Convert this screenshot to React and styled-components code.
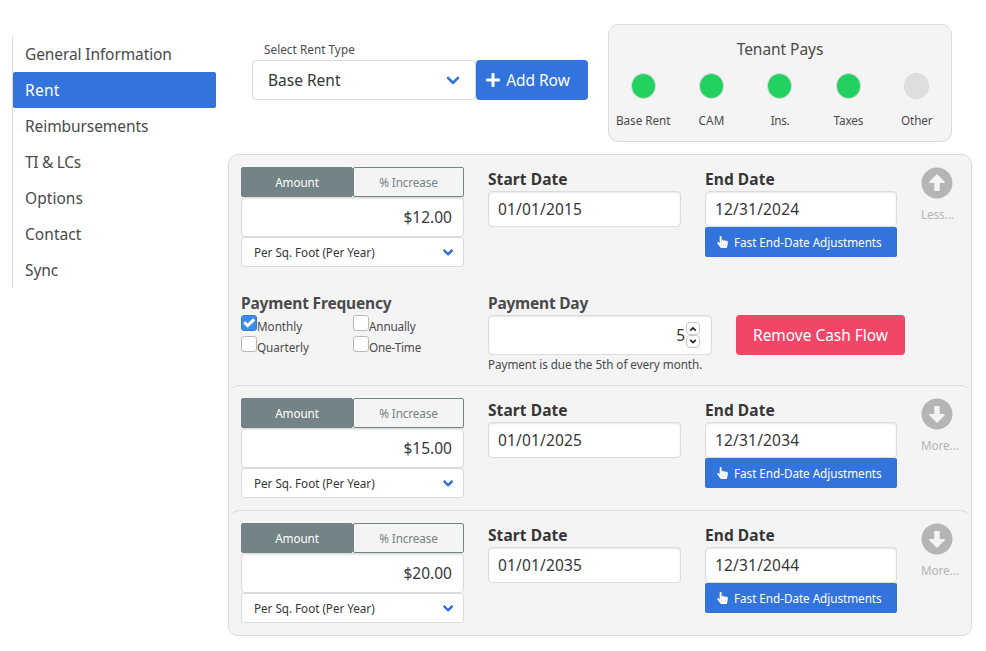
import React, { useState } from 'react';
import styled, { createGlobalStyle } from 'styled-components';
import {
  FaPlus,
  FaHandPointer,
  FaArrowAltCircleUp,
  FaArrowAltCircleDown,
} from 'react-icons/fa';

const color = {
  link: '#3273dc',
  danger: '#f14668',
  success: '#23d160',
  slate: '#738386',
  border: '#dbdbdb',
  panel: '#f4f4f4',
  text: '#4a4a4a',
  strong: '#363636',
  muted: '#b5b5b5',
};

const GlobalStyle = createGlobalStyle`
  *, *::before, *::after { box-sizing: border-box; }
  body {
    margin: 0;
    background: #fff;
    color: ${color.text};
    font-family: "Noto Sans", "Open Sans", sans-serif;
    font-size: 15.5px;
    line-height: 24px;
  }
  button, input { font: inherit; letter-spacing: inherit; }
`;

const Page = styled.div`
  display: flex;
  align-items: flex-start;
  width: 986px;
  height: 651px;
  padding: 24px 14px 0 12px;
  overflow: hidden;
`;

const Label = styled.span`
  letter-spacing: ${(p) => p.$track || 0}px;
  white-space: nowrap;
`;

const SideMenu = styled.nav`
  display: flex;
  flex-direction: column;
  flex: none;
  width: 204px;
  margin: 12px 12px 0 0;
  border-left: 1px solid ${color.border};
`;

const MenuItem = styled.a`
  height: 36px;
  padding: 6px 12px;
  border-radius: 2px;
  color: ${(p) => (p.$active ? '#fff' : color.text)};
  background: ${(p) => (p.$active ? color.link : 'transparent')};
  cursor: pointer;
`;

const Main = styled.main`
  width: 744px;
`;

const Header = styled.header`
  display: flex;
  justify-content: space-between;
  height: 118px;
  margin: 0 20px 12px 24px;
`;

const RentType = styled.div`
  display: flex;
  flex-direction: column;
  padding-top: 15px;
`;

const RentTypeLabel = styled.label`
  height: 21px;
  padding-left: 12px;
  font-size: 11.7px;
  line-height: 21px;
`;

const Row = styled.div`
  display: flex;
`;

const Select = styled.div`
  display: flex;
  align-items: center;
  justify-content: space-between;
  width: ${(p) => (p.$small ? 223 : 224)}px;
  height: ${(p) => (p.$small ? 30 : 40)}px;
  padding: 0 ${(p) => (p.$small ? '12px 0 12px' : '17px 0 15px')};
  border: 1px solid ${color.border};
  border-radius: ${(p) => (p.$small ? 3 : 4)}px;
  background: #fff;
  color: ${color.strong};
  font-size: ${(p) => (p.$small ? 11.7 : 15.5)}px;

  &::after {
    content: '';
    width: ${(p) => (p.$small ? 7.5 : 10)}px;
    height: ${(p) => (p.$small ? 7.5 : 10)}px;
    margin-top: ${(p) => (p.$small ? -3 : -4)}px;
    border: 3.4px solid ${color.link};
    border-width: ${(p) => (p.$small ? 3 : 3.4)}px;
    border-top: 0;
    border-right: 0;
    border-radius: 2px;
    transform: rotate(-45deg);
  }
`;

const Button = styled.button`
  display: flex;
  align-items: center;
  justify-content: center;
  gap: 5px;
  width: ${(p) => p.$width}px;
  height: 40px;
  padding: 0 ${(p) => p.$trim || 0}px 0 0;
  border: 0;
  border-radius: 4px;
  background: ${(p) => (p.$danger ? color.danger : color.link)};
  color: #fff;
  cursor: pointer;
`;

const TenantBox = styled.section`
  display: flex;
  flex-direction: column;
  width: 344px;
  padding-top: 12px;
  border: 1px solid ${color.border};
  border-radius: 10px;
  background: ${color.panel};
  text-align: center;
`;

const TenantOptions = styled.div`
  display: grid;
  grid-template-columns: repeat(5, 68.4px);
`;

const TenantOption = styled.div`
  display: flex;
  flex-direction: column;
  align-items: center;
  padding-top: 12px;
  font-size: 11.7px;
`;

const Dot = styled.span`
  width: 25px;
  height: 26px;
  margin-bottom: 9px;
  border: 1px solid ${color.border};
  border-radius: 50%;
  background: ${(p) => (p.$on ? color.success : '#dedede')};
`;

const CashFlowList = styled.section`
  height: 482px;
  border: 1px solid ${color.border};
  border-radius: 10px;
  background: ${color.panel};
`;

const CashFlow = styled.article`
  padding: 12px 12px 0;
  height: ${(p) => (p.$open ? 230 : 125)}px;
  border-top: ${(p) => (p.$divided ? `1px solid ${color.border}` : '0')};
  border-radius: 10px;
`;

const CashFlowFields = styled.div`
  display: grid;
  grid-template-columns: 223px 193px 192px 38px;
  column-gap: 24px;
`;

const AmountGroup = styled.div`
  display: flex;
  flex-direction: column;
`;

const ToggleButton = styled.button`
  width: ${(p) => (p.$active ? 112 : 111)}px;
  height: 30px;
  padding: 0;
  border: 1px solid ${color.slate};
  border-radius: 2px;
  background: ${(p) => (p.$active ? color.slate : 'transparent')};
  color: ${(p) => (p.$active ? '#fff' : color.slate)};
  font-size: 11.7px;
  cursor: pointer;
`;

const Input = styled.input`
  width: 100%;
  height: ${(p) => p.$height || 36}px;
  padding: 0 ${(p) => (p.$right ? 11 : 9)}px;
  border: 1px solid ${color.border};
  border-radius: 4px;
  outline: 0;
  background: #fff;
  box-shadow: inset 0 1px 2px rgba(10, 10, 10, 0.1);
  color: ${color.strong};
  text-align: ${(p) => (p.$right ? 'right' : 'left')};
  letter-spacing: ${(p) => p.$track || 0}px;
`;

const Field = styled.div`
  display: flex;
  flex-direction: column;
`;

const FieldTitle = styled.div`
  height: 24px;
  color: ${(p) => (p.$soft ? color.text : color.strong)};
  font-weight: 700;
`;

const AdjustButton = styled.button`
  display: flex;
  align-items: center;
  height: 30px;
  padding: 0 0 0 11px;
  gap: 5px;
  border: 0;
  border-radius: 2px;
  background: ${color.link};
  color: #fff;
  font-size: 11.7px;
  cursor: pointer;
`;

const HandIcon = styled(FaHandPointer)`
  width: 13px;
  height: 12px;
`;

const ExpandControl = styled.div`
  display: flex;
  flex-direction: column;
  align-items: flex-start;
  color: ${color.muted};
  font-size: 11.7px;
  cursor: pointer;

  svg { display: block; margin-bottom: 3px; }
`;

const PaymentFields = styled.div`
  display: grid;
  grid-template-columns: 223px 224px 169px;
  column-gap: 24px;
  padding-top: 24px;
`;

const Frequencies = styled.div`
  display: grid;
  grid-template-columns: 112px 111px;
  grid-auto-rows: 21px;
  font-size: 11.7px;
`;

const CheckLabel = styled.label`
  display: flex;
  align-items: flex-start;
  line-height: 23px;
`;

const CheckBox = styled.span`
  display: flex;
  align-items: center;
  justify-content: center;
  width: 16px;
  height: 16px;
  border: 1px solid ${(p) => (p.$checked ? '#2f7be0' : '#bfb8b1')};
  border-radius: 3px;
  background: ${(p) => (p.$checked ? '#3d8bea' : '#fff')};
`;

const NumberBox = styled.div`
  display: flex;
  align-items: center;
  justify-content: flex-end;
  height: 40px;
  padding-right: 11px;
  border: 1px solid ${color.border};
  border-radius: 4px;
  background: #fff;
  box-shadow: inset 0 1px 2px rgba(10, 10, 10, 0.1);
  color: ${color.strong};
`;

const Stepper = styled.div`
  display: flex;
  flex-direction: column;
  margin-left: 1px;
`;

const Step = styled.button`
  display: flex;
  align-items: center;
  justify-content: center;
  width: 14px;
  height: 13px;
  padding: 0;
  border: 1px solid #cdc7c2;
  border-radius: 4px;
  background: #fff;
`;

const Help = styled.p`
  margin: 0;
  font-size: 11.7px;
  line-height: 19px;
`;

const RemoveSlot = styled.div`
  padding-top: 24px;
`;

const menu = [
  ['General Information', -0.11],
  ['Rent', 0.28],
  ['Reimbursements', -0.08],
  ['TI & LCs', -0.32],
  ['Options', 0.05],
  ['Contact', 0.05],
  ['Sync', -0.1],
];

const tenantPays = [
  { name: 'Base Rent', on: true, track: -0.05 },
  { name: 'CAM', on: true, track: 0.3 },
  { name: 'Ins.', on: true, track: -0.4 },
  { name: 'Taxes', on: true, track: -0.1 },
  { name: 'Other', on: false, track: -0.1 },
];

const cashFlows = [
  { amount: '$12.00', start: '01/01/2015', end: '12/31/2024', open: true },
  { amount: '$15.00', start: '01/01/2025', end: '12/31/2034' },
  { amount: '$20.00', start: '01/01/2035', end: '12/31/2044' },
];

const frequencies = [
  ['Monthly', -0.02],
  ['Annually', -0.15],
  ['Quarterly', -0.05],
  ['One-Time', -0.15],
];

function PaymentSettings() {
  const [selected, setSelected] = useState('Monthly');
  return (
    <PaymentFields>
      <Field>
        <FieldTitle $soft><Label $track={-0.17}>Payment Frequency</Label></FieldTitle>
        <Frequencies>
          {frequencies.map(([name, track]) => (
            <CheckLabel key={name} onClick={() => setSelected(name)}>
              <CheckBox $checked={selected === name}>
                {selected === name && (
                  <svg width="14" height="14" viewBox="0 0 14 14">
                    <path d="M2.2 6.2 5.6 9.6 12.2 3.4" fill="none" stroke="#fff" strokeWidth="3" />
                  </svg>
                )}
              </CheckBox>
              <Label $track={track}>{name}</Label>
            </CheckLabel>
          ))}
        </Frequencies>
      </Field>
      <Field>
        <FieldTitle $soft><Label $track={-0.22}>Payment Day</Label></FieldTitle>
        <NumberBox>
          5
          <Stepper>
            <Step aria-label="Increase">
              <svg width="8" height="6" viewBox="0 0 8 6">
                <path d="M1.2 4.6 4 1.9 6.8 4.6" fill="none" stroke="#1f2426" strokeWidth="1.7" />
              </svg>
            </Step>
            <Step aria-label="Decrease">
              <svg width="8" height="6" viewBox="0 0 8 6">
                <path d="M1.2 .9 4 3.6 6.8 .9" fill="none" stroke="#1f2426" strokeWidth="1.7" />
              </svg>
            </Step>
          </Stepper>
        </NumberBox>
        <Help><Label $track={-0.05}>Payment is due the 5th of every month.</Label></Help>
      </Field>
      <RemoveSlot>
        <Button $danger $width={169}><Label $track={-0.03}>Remove Cash Flow</Label></Button>
      </RemoveSlot>
    </PaymentFields>
  );
}

function CashFlowRow({ flow, divided }) {
  return (
    <CashFlow $open={flow.open} $divided={divided}>
      <CashFlowFields>
        <AmountGroup>
          <Row>
            <ToggleButton $active><Label $track={-0.1}>Amount</Label></ToggleButton>
            <ToggleButton><Label $track={-0.12}>% Increase</Label></ToggleButton>
          </Row>
          <Input $height={40} $right $track={0.02} defaultValue={flow.amount} />
          <Select $small><Label $track={-0.03}>Per Sq. Foot (Per Year)</Label></Select>
        </AmountGroup>
        <Field>
          <FieldTitle><Label $track={0.08}>Start Date</Label></FieldTitle>
          <Input $track={0.15} defaultValue={flow.start} />
        </Field>
        <Field>
          <FieldTitle><Label $track={0.07}>End Date</Label></FieldTitle>
          <Input $track={0.18} defaultValue={flow.end} />
          <AdjustButton>
            <HandIcon />
            <Label $track={-0.03}>Fast End-Date Adjustments</Label>
          </AdjustButton>
        </Field>
        <ExpandControl>
          {flow.open ? <FaArrowAltCircleUp size={32} /> : <FaArrowAltCircleDown size={32} />}
          <Label $track={-0.08}>{flow.open ? 'Less...' : 'More...'}</Label>
        </ExpandControl>
      </CashFlowFields>
      {flow.open && <PaymentSettings />}
    </CashFlow>
  );
}

export default function App() {
  return (
    <>
      <GlobalStyle />
      <Page>
        <SideMenu>
          {menu.map(([name, track]) => (
            <MenuItem key={name} $active={name === 'Rent'}>
              <Label $track={track}>{name}</Label>
            </MenuItem>
          ))}
        </SideMenu>
        <Main>
          <Header>
            <RentType>
              <RentTypeLabel><Label $track={0.06}>Select Rent Type</Label></RentTypeLabel>
              <Row>
                <Select><Label>Base Rent</Label></Select>
                <Button $width={112} $trim={9}>
                  <FaPlus size={16} />
                  <Label $track={-0.05}>Add Row</Label>
                </Button>
              </Row>
            </RentType>
            <TenantBox>
              <Label $track={-0.05}>Tenant Pays</Label>
              <TenantOptions>
                {tenantPays.map((t) => (
                  <TenantOption key={t.name}>
                    <Dot $on={t.on} />
                    <Label $track={t.track}>{t.name}</Label>
                  </TenantOption>
                ))}
              </TenantOptions>
            </TenantBox>
          </Header>
          <CashFlowList>
            {cashFlows.map((flow, i) => (
              <CashFlowRow key={flow.start} flow={flow} divided={i > 0} />
            ))}
          </CashFlowList>
        </Main>
      </Page>
    </>
  );
}
